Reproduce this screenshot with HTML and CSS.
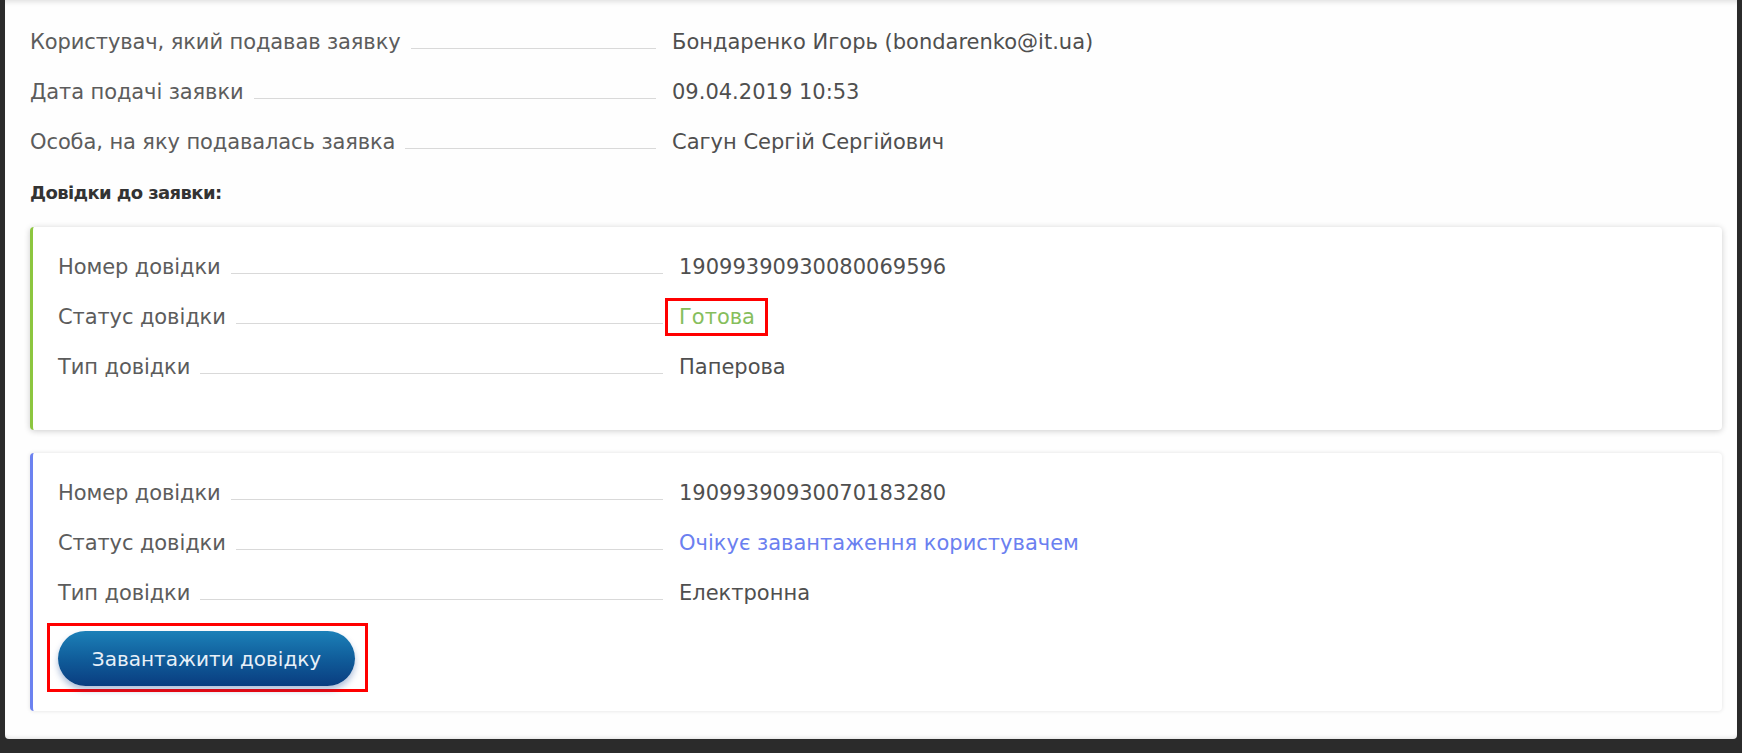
FILE: index.html
```html
<!DOCTYPE html>
<html lang="uk">
<head>
<meta charset="utf-8">
<title>Заявка</title>
<link rel="stylesheet" href="styles.css">
</head>
<body>
<div class="panel">
  <div class="row top-row">
    <div class="label-cell"><span class="label">Користувач, який подавав заявку</span><span class="leader"></span></div>
    <div class="value">Бондаренко Игорь (bondarenko@it.ua)</div>
  </div>
  <div class="row top-row">
    <div class="label-cell"><span class="label">Дата подачі заявки</span><span class="leader"></span></div>
    <div class="value">09.04.2019 10:53</div>
  </div>
  <div class="row top-row">
    <div class="label-cell"><span class="label">Особа, на яку подавалась заявка</span><span class="leader"></span></div>
    <div class="value">Сагун Сергій Сергійович</div>
  </div>
  <div class="heading">Довідки до заявки:</div>

  <div class="card card-green">
    <div class="row">
      <div class="label-cell"><span class="label">Номер довідки</span><span class="leader"></span></div>
      <div class="value">19099390930080069596</div>
    </div>
    <div class="row">
      <div class="label-cell"><span class="label">Статус довідки</span><span class="leader"></span></div>
      <div class="value"><span class="mark-text status-ready">Готова</span></div>
    </div>
    <div class="row">
      <div class="label-cell"><span class="label">Тип довідки</span><span class="leader"></span></div>
      <div class="value">Паперова</div>
    </div>
  </div>

  <div class="card card-blue">
    <div class="row">
      <div class="label-cell"><span class="label">Номер довідки</span><span class="leader"></span></div>
      <div class="value">19099390930070183280</div>
    </div>
    <div class="row">
      <div class="label-cell"><span class="label">Статус довідки</span><span class="leader"></span></div>
      <div class="value status-wait">Очікує завантаження користувачем</div>
    </div>
    <div class="row">
      <div class="label-cell"><span class="label">Тип довідки</span><span class="leader"></span></div>
      <div class="value">Електронна</div>
    </div>
    <div class="mark-btn"><button class="btn" type="button">Завантажити довідку</button></div>
  </div>
</div>
</body>
</html>
```
FILE: styles.css
```css
html, body {
  margin: 0;
  padding: 0;
}
body {
  background: #2b2b2b;
  font-family: "DejaVu Sans", "Liberation Sans", sans-serif;
  font-size: 21px;
  color: #565656;
  height: 753px;
  overflow: hidden;
}
.panel {
  margin: 0 5px;
  background: #fefefe;
  padding: 17px 15px 28px 25px;
  border-radius: 0 0 4px 4px;
  box-shadow: inset 0 6px 5px -4px rgba(0, 0, 0, 0.12), inset 0 -4px 4px -3px rgba(0, 0, 0, 0.12);
}
.row {
  height: 50px;
  display: flex;
  align-items: center;
}
.label-cell {
  width: 605px;
  flex: none;
  display: flex;
  align-items: baseline;
}
.top-row .label-cell {
  width: 626px;
}
.label {
  white-space: nowrap;
  color: #5c5c5c;
  letter-spacing: -0.1px;
}
.leader {
  flex: 1;
  margin-left: 10px;
  border-bottom: 1px solid #d9d9d9;
  height: 1px;
}
.value {
  margin-left: 16px;
  white-space: nowrap;
  color: #4f4f4f;
}
.heading {
  height: 50px;
  display: flex;
  align-items: center;
  font-weight: bold;
  color: #333;
  font-size: 18px;
  letter-spacing: -0.6px;
  margin-bottom: 10px;
}
.card {
  background: #fff;
  border-radius: 4px;
  padding: 15px 25px 38px 25px;
}
.card-green {
  border-left: 3px solid #8cc63f;
  box-shadow: 0 1px 6px rgba(0, 0, 0, 0.2);
}
.card-blue {
  margin-top: 23px;
  border-left: 3px solid #6c82f0;
  box-shadow: 0 0 4px rgba(0, 0, 0, 0.12);
  padding-bottom: 19px;
}
.mark-text {
  display: inline-block;
  border: 3px solid #ff0000;
  padding: 4px 10px 4px 11px;
  margin-left: -14px;
  line-height: 24px;
}
.status-ready {
  color: #86be5c;
}
.status-wait {
  color: #6b80f0;
}
.mark-btn {
  display: inline-block;
  margin-top: 5px;
  margin-left: -11px;
  border: 3px solid #ff0000;
  padding: 5px 10px 3px 8px;
}
.btn {
  display: block;
  width: 297px;
  height: 55px;
  border: none;
  border-radius: 28px;
  background: linear-gradient(to bottom, #1c80b8 0%, #0f5a98 55%, #0a3d80 100%);
  box-shadow: 0 4px 6px rgba(20, 70, 150, 0.35);
  color: #e8f0f8;
  font-family: "DejaVu Sans", "Liberation Sans", sans-serif;
  font-size: 20px;
  padding: 0;
  cursor: pointer;
}
```
